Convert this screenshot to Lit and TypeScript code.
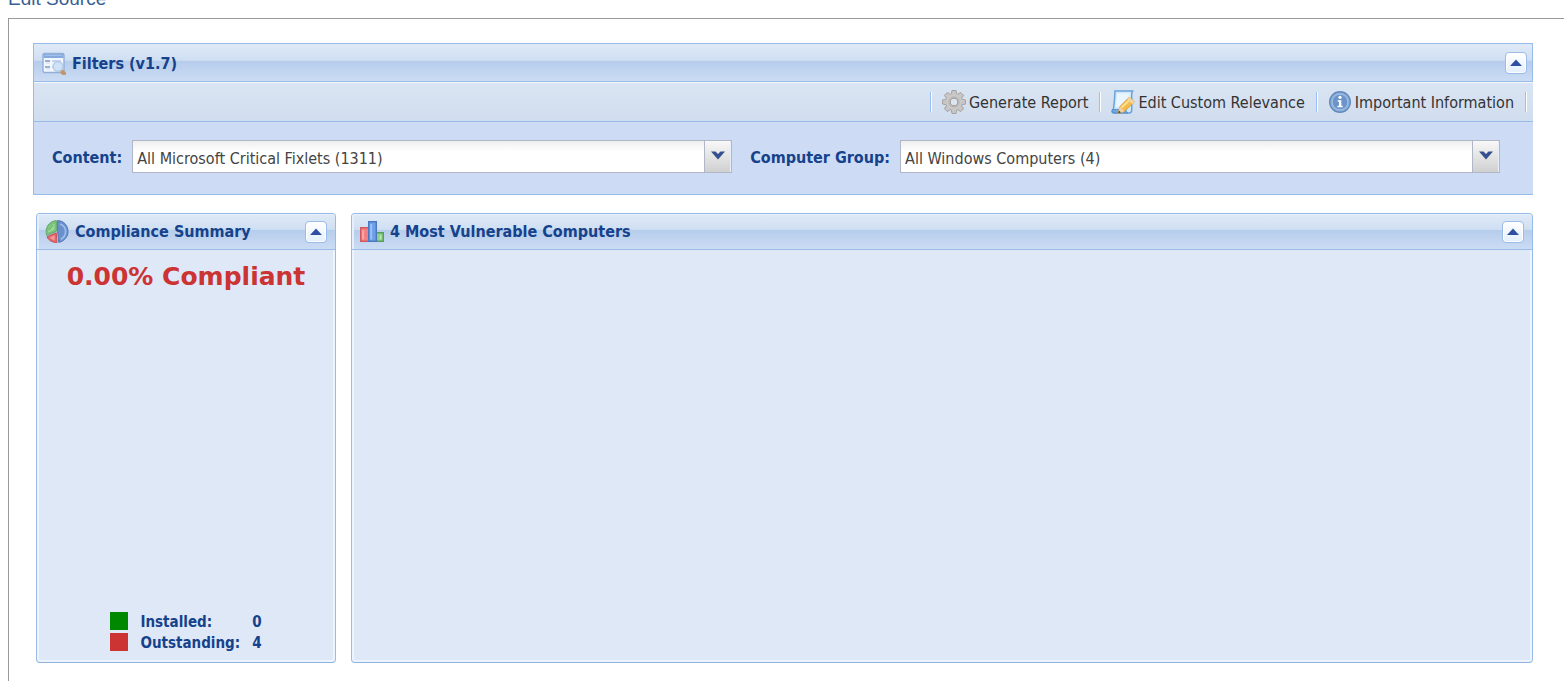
import { LitElement, html, css, svg } from "lit";
import { customElement, property } from "lit/decorators.js";

const filterIcon = html`<svg width="24" height="24" viewBox="0 0 24 24" aria-hidden="true">
  <rect x="1" y="2.500" width="21" height="19" rx="1.500" fill="#f1f7fe" stroke="#93afd8" stroke-width="1.400"/>
  <rect x="1.500" y="3" width="20" height="4" fill="#86a9dc"/>
  <path d="M3 4.300h17" stroke="#a9c6ef"/>
  <path d="M3 10h5M3 16h5" stroke="#8196c0" stroke-width="1.600"/>
  <path d="M4 12h4M4 18h4" stroke="#d0dcee"/>
  <path d="M10 10h9M10 16h3" stroke="#c5d4e8" stroke-width="2"/>
  <path d="M20 20.500l2 2" stroke="#bf976a" stroke-width="4" stroke-linecap="round"/>
  <circle cx="16" cy="15.500" r="4.800" fill="#cfe3f8" stroke="#b3cae4" stroke-width="1.400"/>
</svg>`;

const pieIcon = html`<svg width="24" height="24" viewBox="0 0 24 24" aria-hidden="true">
  <path d="M12.600 .6C19 .8 23 5.600 23 11.600c0 5-3.600 9.600-9.200 10.800L12.600 11.600z" fill="#6990cd" stroke="#5378b4"/>
  <path d="M15 4c3.600 1.200 5.600 4 5.600 7.600 0 3.400-1.800 6.200-4.800 7.800" fill="none" stroke="#9dbce8" stroke-width="1.800"/>
  <path d="M11.400 .6v10.600L1.600 15.400C-.4 7.600 4 1.200 11.400.6z" fill="#7cc47b" stroke="#66a86c"/>
  <path d="M9.400 3.400C5.400 5 3.200 8.200 3.200 12.400L9.400 9.600z" fill="#9ddb97"/>
  <path d="M4 10l4-5" stroke="#62ab66" stroke-width="1.200"/>
  <path d="M11.200 12.800L12 22.600C7 22.600 3.400 20.200 2 16.800z" fill="#e2686c" stroke="#cc5257"/>
  <path d="M9.600 15.200v5c-2-.4-3.600-1.400-4.800-2.800z" fill="#f19a9a"/>
</svg>`;

const barsIcon = html`<svg width="24" height="24" viewBox="0 0 24 24" aria-hidden="true">
  <rect x=".7" y="7.700" width="8" height="13.600" fill="#f47f80" stroke="#d0585e" stroke-width="1.400"/>
  <path d="M3 10v9.500" stroke="#fab0ae" stroke-width="1.600"/>
  <rect x="16" y="12.700" width="7.300" height="8.600" fill="#8ccf86" stroke="#559f5c" stroke-width="1.400"/>
  <path d="M20.500 15v4.500" stroke="#bbe8b0" stroke-width="1.600"/>
  <rect x="8.700" y="1.700" width="7.600" height="19.600" fill="#6fa0e6" stroke="#4b76c0" stroke-width="1.400"/>
  <path d="M11.200 4v15.500" stroke="#a0c4f5" stroke-width="1.800"/>
</svg>`;

const gearIcon = html`<svg width="24" height="24" viewBox="0 0 24 24" aria-hidden="true">
  ${[0, 45, 90, 135, 180, 225, 270, 315].map(
    (a) => svg`<path d="M9 5L10 .5h4L15 5z" fill="#c8c6c4" stroke="#9f9d9b" stroke-width=".9" transform=${`rotate(${a} 12 12)`}/>`
  )}
  <circle cx="12" cy="12" r="8.200" fill="#cbc9c7"/>
  <circle cx="12" cy="12" r="5.800" fill="#bdbbb9"/>
  <circle cx="12" cy="12" r="3.800" fill="#dbe6f4" stroke="#a5a3a1" stroke-width="1.200"/>
</svg>`;

const editIcon = html`<svg width="24" height="24" viewBox="0 0 24 24" aria-hidden="true">
  <path d="M4 1h17.500c-1 1.500-.8 3-.8 5v14c0 2-.8 3-2.500 3H2.500C.4 22.600.6 20 2.400 19.500 3.200 13.500 3.800 7.500 4 1z" fill="#d3e9fb" stroke="#6ba2da" stroke-width="1.500"/>
  <path d="M6 3.500h12.500L17 17H5z" fill="#e9f5ff"/>
  <path d="M1.600 19.400h13.500c0 1.500.6 2.900 1.800 3.600H3C1.200 22.800.8 21 1.600 19.400z" fill="#6ea8e0" stroke="#4d84c4" stroke-width=".8"/>
  <path d="M18.400 7l5 5-10 9.400-6.400 2.200 2-7.200z" fill="#f5bb4a" stroke="#d39f4a" stroke-width=".9"/>
  <path d="M18.400 7l5 5-2.200 2-5-5z" fill="#f3d5a3"/>
  <path d="M10.500 17.600l7.600-7" stroke="#fde08c" stroke-width="2"/>
  <path d="M8.800 16.600l4.600 4.600-6.200 2.200z" fill="#efd3a6"/>
  <path d="M8 20.600l2 1.800-3 1z" fill="#5a4632"/>
</svg>`;

const infoIcon = html`<svg width="24" height="24" viewBox="0 0 24 24" aria-hidden="true">
  <circle cx="12" cy="12" r="10.300" fill="#8fb1da" stroke="#6189bd" stroke-width="1.400"/>
  <circle cx="12" cy="12" r="7.800" fill="#6a94ca" stroke="#a0bfe3"/>
  <circle cx="12" cy="7.300" r="1.600" fill="#fff"/>
  <path d="M9.700 10.200h3.600v5.600h1.400v1.500H9.500v-1.500H11v-4.100H9.700z" fill="#fff"/>
</svg>`;

@customElement("collapse-button")
export class CollapseButton extends LitElement {
  @property() label = "Collapse";

  static styles = css`
    :host {
      display: block;
    }
    .tool {
      display: grid;
      place-items: center;
      width: 22px;
      height: 22px;
      padding: 0;
      border: 1px solid #9bbbe8;
      border-radius: 4px;
      background: linear-gradient(#fff, #e3f0fd);
      box-shadow: inset 0 0 0 1px #fff;
      cursor: pointer;
    }
    svg {
      display: block;
    }
  `;

  render() {
    return html`<button class="tool" type="button" aria-label=${this.label}>
      <svg width="12" height="8" viewBox="0 0 12 8"><path d="M6 0.500L12 7H0z" fill="#2f4fa3"/></svg>
    </button>`;
  }
}

/** Compliance dashboard: filters on top, summary and computer panels below. */
@customElement("app-root")
export class AppRoot extends LitElement {
  static styles = css`
    :host {
      display: block;
      font-family: "DejaVu Sans Condensed", "Noto Sans", sans-serif;
      font-size: 16px;
      line-height: 20px;
      color: #333;
      background: #fff;
    }
    * {
      box-sizing: border-box;
    }
    .page {
      display: flex;
      flex-direction: column;
      min-height: 100vh;
      padding-left: 8px;
    }
    .source {
      display: flex;
      align-items: flex-end;
      height: 18px;
      padding-bottom: 9px;
      font-family: "Liberation Sans", Arial, sans-serif;
      font-size: 19px;
      line-height: 20px;
    }
    .source a {
      color: #3a5f92;
      text-decoration: none;
    }
    .frame {
      flex: 1;
      padding: 24px 31px 18px 24px;
      border: solid #999;
      border-width: 1px 0 0 1px;
    }
    .title {
      flex: 1;
      margin: 0;
      padding-top: 1px;
      font-size: 16px;
      line-height: 20px;
      font-weight: bold;
      color: #15428b;
      white-space: nowrap;
    }
    svg {
      display: block;
      flex: none;
    }
    .filters {
      border: 1px solid #99bbe8;
      border-right: 0;
      background: #cddcf4;
    }
    .head {
      display: flex;
      align-items: center;
      gap: 6px;
      height: 38px;
      padding: 1px 5px 0 8px;
      border: solid #99bbe8;
      border-width: 0 1px 1px 0;
      background: linear-gradient(#dfeaf7, #cfdff2 44%, #b7cdec 47%, #cbdcf4);
    }
    .toolbar {
      display: flex;
      justify-content: flex-end;
      align-items: center;
      height: 40px;
      padding-right: 6px;
      border-top: 1px solid #f2f7fd;
      border-bottom: 1px solid #99bbe8;
      background: linear-gradient(#dae5f3, #d0ddee);
    }
    .action {
      display: flex;
      align-items: center;
      gap: 3px;
      padding: 0 11px 0 10px;
      border: 0;
      background: none;
      font: inherit;
      color: #333;
      white-space: nowrap;
      cursor: pointer;
    }
    .action span {
      padding-top: 2px;
    }
    .rule {
      width: 2px;
      height: 20px;
      background: linear-gradient(90deg, #98c0f0 50%, #fff 50%);
    }
    .fields {
      display: grid;
      grid-template-columns: auto 1fr auto 1fr;
      align-items: center;
      padding: 18px 33px 21px 18px;
    }
    .label {
      margin-right: 10px;
      padding-top: 3px;
      font-weight: bold;
      color: #15428b;
      white-space: nowrap;
    }
    .combo {
      display: grid;
      grid-template-columns: 1fr 27px;
      height: 33px;
      border: 1px solid #b0b8c8;
      background: linear-gradient(#eee, #fff 10px);
    }
    .combo + .label {
      margin-left: 18px;
    }
    .select {
      grid-area: 1 / 1 / 2 / 3;
      width: 100%;
      padding: 4px 30px 0 4px;
      border: 0;
      appearance: none;
      background: none;
      font: inherit;
      color: #444;
    }
    .trigger {
      grid-area: 1 / 2 / 2 / 3;
      display: grid;
      justify-items: center;
      padding-top: 10px;
      border-left: 1px solid #b0b8c8;
      border-right: 1px solid #e8eef8;
      background: linear-gradient(#f8f8f8, #e4e4e4 50%, #d0d0d0);
      pointer-events: none;
    }
    .cards {
      display: grid;
      grid-template-columns: 300px 1fr;
      gap: 15px;
      margin: 18px 0 0 3px;
    }
    .card {
      display: flex;
      flex-direction: column;
      min-height: 450px;
      border: 1px solid #99bbe8;
      border-bottom-color: #8fb3de;
      border-radius: 4px;
      background: #dfe8f6;
      box-shadow: inset 0 0 0 2px #edf4fd;
      overflow: hidden;
    }
    .card .head {
      height: 36px;
      padding: 0 8px;
      border-right: 0;
      box-shadow: inset 2px 1px 0 #e6effa;
    }
    .score {
      margin: 9px 0 0;
      font-family: "DejaVu Sans", "Noto Sans", sans-serif;
      font-size: 25px;
      line-height: 36px;
      font-weight: bold;
      text-align: center;
      color: #c33;
      white-space: nowrap;
    }
    .legend {
      align-self: center;
      margin: auto 0 8px;
      border-collapse: collapse;
      font-size: 15px;
      line-height: 21px;
      color: #15428b;
      font-weight: bold;
    }
    .legend th,
    .legend td {
      padding: 0 12px 0 0;
      text-align: left;
      vertical-align: top;
    }
    .legend td:last-child {
      padding: 0;
    }
    .swatch {
      display: block;
      width: 18px;
      height: 18px;
    }
    .installed {
      background: #080;
    }
    .outstanding {
      background: #c33;
    }
  `;

  private combo(id: string, label: string, value: string) {
    return html`
      <label class="label" for=${id}>${label}</label>
      <div class="combo">
        <select class="select" id=${id}>
          <option>${value}</option>
        </select>
        <span class="trigger">
          <svg width="14" height="9" viewBox="0 0 14 9"><path d="M0 0.500h4.500L7 3l2.500-2.500H14L7 8.500z" fill="#35508f"/></svg>
        </span>
      </div>
    `;
  }

  private action(icon: unknown, text: string) {
    return html`<span class="rule"></span><button class="action" type="button">${icon}<span>${text}</span></button>`;
  }

  render() {
    return html`
      <div class="page">
        <div class="source"><a href="#source">Edit Source</a></div>
        <main class="frame">
          <section class="filters">
            <header class="head">
              ${filterIcon}
              <h2 class="title">Filters (v1.7)</h2>
              <collapse-button label="Collapse filters"></collapse-button>
            </header>
            <div class="toolbar">
              ${this.action(gearIcon, "Generate Report")}
              ${this.action(editIcon, "Edit Custom Relevance")}
              ${this.action(infoIcon, "Important Information")}
              <span class="rule"></span>
            </div>
            <div class="fields">
              ${this.combo("content", "Content:", "All Microsoft Critical Fixlets (1311)")}
              ${this.combo("group", "Computer Group:", "All Windows Computers (4)")}
            </div>
          </section>
          <div class="cards">
            <section class="card">
              <header class="head">
                ${pieIcon}
                <h2 class="title">Compliance Summary</h2>
                <collapse-button label="Collapse summary"></collapse-button>
              </header>
              <p class="score">0.00% Compliant</p>
              <table class="legend">
                <tr>
                  <td><span class="swatch installed"></span></td>
                  <th scope="row">Installed:</th>
                  <td>0</td>
                </tr>
                <tr>
                  <td><span class="swatch outstanding"></span></td>
                  <th scope="row">Outstanding:</th>
                  <td>4</td>
                </tr>
              </table>
            </section>
            <section class="card">
              <header class="head">
                ${barsIcon}
                <h2 class="title">4 Most Vulnerable Computers</h2>
                <collapse-button label="Collapse computers"></collapse-button>
              </header>
            </section>
          </div>
        </main>
      </div>
    `;
  }
}
